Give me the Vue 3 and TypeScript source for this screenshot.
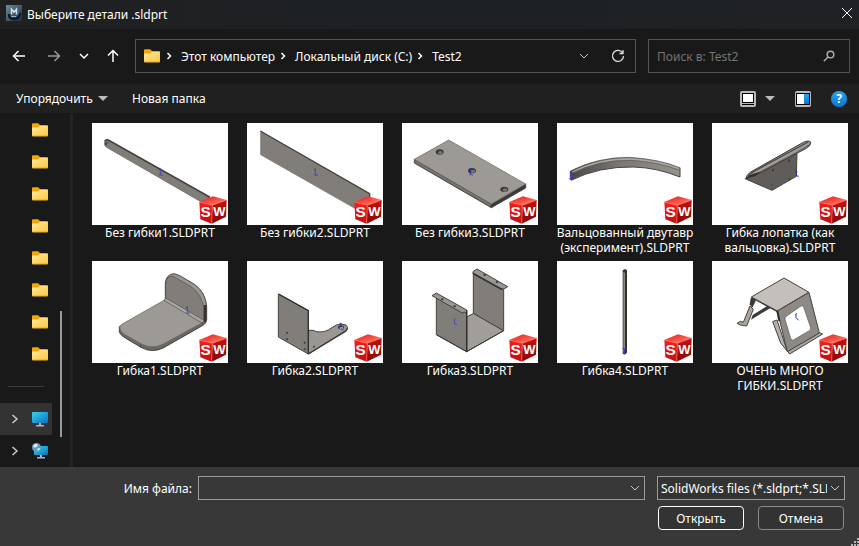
<script setup lang="ts">
import { ref } from 'vue'

interface Shape {
  d: string
  fill?: string
  stroke?: string
  width?: number
}

interface Part {
  name: string
  viewBox: string
  shapes: Shape[]
}

const face = '#817e79'
const light = '#9d9994'
const dark = '#3b3937'
const edge = '#45423f'
const axis = '#2b2bd0'

const outline = (d: string, fill: string): Shape => ({ d, fill, stroke: edge, width: 3 })
const line = (d: string, stroke: string = edge, width = 3): Shape => ({ d, stroke, width })
const dot = (x: number, y: number, rx: number, ry: number, fill: string = dark): Shape => ({
  d: `M${x - rx} ${y}a${rx} ${ry} 0 1 0 ${rx * 2} 0a${rx} ${ry} 0 1 0 ${-rx * 2} 0z`,
  fill,
})
const origin = (x: number, y: number): Shape => line(`M${x - 4} ${y + 4}L${x} ${y}V${y + 17}L${x + 8} ${y + 21}M${x - 4} ${y + 19}H${x + 3}`, axis, 2)

const parts: Part[] = [
  {
    name: 'Без гибки1.SLDPRT',
    viewBox: '21 24 408 306',
    shapes: [
      { d: 'M57 84Q58 74 68 74L375 247V277L68 99Q57 93 57 84Z', fill: face },
      line('M59 79Q62 73 70 75L375 247', edge, 5),
      line('M58 88Q60 96 68 99L350 261', '#6d6a66', 2),
      dot(66, 86, 6, 4),
      dot(68, 87, 3, 2, '#b0ada8'),
      origin(226, 161),
    ],
  },
  {
    name: 'Без гибки2.SLDPRT',
    viewBox: '486 24 408 306',
    shapes: [
      { d: 'M527 48L854 236V305L527 119Z', fill: face },
      line('M526 48L854 236V250', edge, 4),
      line('M527 48V119L820 286', '#706d69', 2),
      origin(691, 161),
    ],
  },
  {
    name: 'Без гибки3.SLDPRT',
    viewBox: '21 24 408 306',
    shapes: [
      outline('M58 133L289 267V278L58 144Z', '#77736e'),
      outline('M289 267L392 207V219L289 278Z', dark),
      { d: 'M58 133L161 75L392 207L289 267Z', fill: light, stroke: '#65625e', width: 2 },
      dot(134, 111, 12, 8),
      dot(136, 113, 7, 5, '#77736e'),
      dot(231, 167, 12, 8),
      dot(234, 169, 7, 5, '#77736e'),
      dot(328, 223, 12, 8),
      dot(330, 225, 7, 5, '#77736e'),
      origin(226, 160),
    ],
  },
  {
    name: 'Вальцованный двутавр (эксперимент).SLDPRT',
    viewBox: '486 24 408 306',
    shapes: [
      { d: 'M526 168Q608 126 704 127Q790 132 855 158V186Q786 158 716 156Q612 154 528 196Z', fill: 'url(#beam)' },
      line('M527 168Q608 126 704 127Q790 132 855 158', '#55524f', 2),
      line('M532 171Q610 132 704 132Q790 137 850 161', '#aaa6a1', 4),
      line('M536 174Q612 136 704 136Q790 141 850 165', '#5d5a57', 2),
      line('M528 196Q612 154 716 156Q786 158 855 186V158', '#45423f', 3),
      line('M526 168V195M524 190H533', axis, 3),
    ],
  },
  {
    name: 'Гибка лопатка (как вальцовка).SLDPRT',
    viewBox: '36 24 408 306',
    shapes: [
      outline('M137 192L160 168L291 112L289 184L216 226Z', '#605c59'),
      { d: 'M137 192Q140 178 152 171L310 82Q326 75 332 81Q334 91 319 100L290 115L180 174Q160 178 137 192Z', fill: '#a19c98', stroke: '#383634', width: 3 },
      line('M144 185Q151 175 164 168L324 81', '#4a4744', 4),
      line('M150 186Q160 176 180 171L292 111L330 88', '#5b5754', 3),
      { d: 'M137 192Q145 180 157 177L181 171L166 183Z', fill: '#34312f' },
      dot(219, 165, 3, 4),
      dot(267, 137, 3, 4),
      dot(268, 192, 3, 3),
      dot(215, 210, 2, 2),
      line('M289 168V182L296 184M286 170H292', axis, 3),
    ],
  },
  {
    name: 'Гибка1.SLDPRT',
    viewBox: '21 18 408 306',
    shapes: [
      outline('M103 215V232Q106 241 126 252L168 277Q202 296 236 278L352 212Q365 205 364 190V160L240 140Z', '#6b6864'),
      { d: 'M110 208L240 134L354 202L231 269Q200 283 170 267L120 239Q95 222 110 208Z', fill: light, stroke: '#65625e', width: 2 },
      outline('M241 131V84Q244 57 268 56L286 63L330 89Q361 112 365 153V194Q363 204 354 205Z', '#9a9691'),
      { d: 'M242 130V88Q243 62 265 64L318 95Q351 119 356 158V197Z', fill: face, stroke: '#524f4c', width: 2 },
      line('M360 150V201', '#35322f', 7),
      { d: 'M242 129L357 196L351 204L237 136Z', fill: '#aaa6a1', stroke: '#55524e', width: 2 },
      line('M166 268V278', '#45423f', 2),
      origin(307, 155),
    ],
  },
  {
    name: 'Гибка2.SLDPRT',
    viewBox: '486 18 408 306',
    shapes: [
      outline('M671 226Q685 224 695 230Q720 234 741 218L754 210Q770 204 783 210Q791 216 785 225L670 297Z', '#9a9691'),
      line('M787 219Q787 226 780 230L670 297', dark, 4),
      outline('M580 117L670 167V297L580 246Z', face),
      line('M581 117L670 167V295', '#343230', 4),
      dot(606, 233, 3, 3),
      dot(606, 253, 3, 3),
      dot(659, 263, 3, 3),
      dot(659, 283, 3, 3),
      dot(687, 275, 3, 3),
      dot(768, 217, 9, 6),
      dot(769, 219, 5, 3, '#ffffff'),
      line('M768 204V221L775 224M764 206L768 204', axis, 3),
    ],
  },
  {
    name: 'Гибка3.SLDPRT',
    viewBox: '21 18 408 306',
    shapes: [
      outline('M236 175L326 227L215 290V186Z', '#a19d98'),
      outline('M235 54L326 104V227L235 175Z', face),
      outline('M234 50L246 42L338 95L327 102Q322 99 318 103L234 57Z', '#9a9691'),
      line('M235 55L321 103', '#33312f', 4),
      outline('M124 129L215 170V290L124 239Z', face),
      outline('M111 122L124 114L215 165V174Q209 169 202 174Z', '#9a9691'),
      line('M215 166V290', '#2f2d2b', 4),
      line('M124 239L215 290L326 227', dark, 3),
      dot(142, 133, 4, 3),
      dot(179, 154, 4, 3),
      dot(269, 60, 4, 3),
      dot(306, 81, 4, 3),
      line('M182 190L178 193V206L186 209', axis, 2),
    ],
  },
  {
    name: 'Гибка4.SLDPRT',
    viewBox: '486 18 408 306',
    shapes: [
      { d: 'M683 46L690 42L696 46V293L689 299L683 294Z', fill: '#35332f' },
      { d: 'M685 50L690 53V296L685 292Z', fill: '#8b8781' },
      line('M683 281H688V296H683', axis, 3),
    ],
  },
  {
    name: 'ОЧЕНЬ МНОГО ГИБКИ.SLDPRT',
    viewBox: '36 18 408 306',
    shapes: [
      { d: 'M152 130L165 125L167 138L157 158L149 148Z', fill: dark },
      { d: 'M158 180L203 152L213 158L153 194Z', fill: dark },
      line('M155 127L232 169', '#35332f', 5),
      outline('M111 205L121 199L130 202L150 153L160 163L140 213L121 210Z', '#aaa59f'),
      outline('M154 126L252 69L327 112L232 168Z', '#c4bfba'),
      outline('M218 200L231 195L262 289L242 264Z', '#b4afaa'),
      outline('M262 288L358 233L368 237L269 297Z', '#aaa59f'),
      outline('M232 168L327 112L358 234L262 290Z', '#8d8984'),
      { d: 'M259 184L303 153Q309 150 311 157L332 218Q333 223 328 227L280 255Q275 257 272 250L255 193Q254 188 259 184Z', fill: '#ffffff', stroke: '#5a5753', width: 2 },
      line('M232 168L238 198', '#2c2a28', 6),
      line('M232 168L327 112', '#57544f', 3),
      line('M288 176V188L296 196M286 178L290 176', axis, 3),
    ],
  },
]

const quickFolders = 8
const crumbs = ['Этот компьютер', 'Локальный диск (C:)', 'Test2']
const fileName = ref('')
const query = ref('')
</script>

<template>
  <div class="dialog">
    <svg class="defs" width="0" height="0" aria-hidden="true">
      <defs>
        <linearGradient id="folder" x1="0" y1="0" x2="1" y2="1">
          <stop offset="0" stop-color="#ffe9a0" />
          <stop offset="1" stop-color="#ffc83a" />
        </linearGradient>
        <linearGradient id="screen" x1="0" y1="0" x2="1" y2="1">
          <stop offset="0" stop-color="#35d6e8" />
          <stop offset="1" stop-color="#0b6fc4" />
        </linearGradient>
        <linearGradient id="beam">
          <stop offset="0" stop-color="#4a4845" />
          <stop offset="0.45" stop-color="#7b7873" />
          <stop offset="1" stop-color="#96928d" />
        </linearGradient>
        <linearGradient id="cubeTop" x1="0" y1="0" x2="1" y2="1">
          <stop offset="0" stop-color="#e01814" />
          <stop offset="0.6" stop-color="#ff5a4c" />
          <stop offset="1" stop-color="#ffb3a8" />
        </linearGradient>
        <linearGradient id="cubeLeft" x1="0" y1="0" x2="0" y2="1">
          <stop offset="0" stop-color="#f02320" />
          <stop offset="1" stop-color="#c40d0d" />
        </linearGradient>
        <linearGradient id="cubeRight" x1="0" y1="0" x2="0" y2="1">
          <stop offset="0" stop-color="#c3120f" />
          <stop offset="1" stop-color="#8e0606" />
        </linearGradient>
        <linearGradient id="logo" x1="0" y1="0" x2="1" y2="1">
          <stop offset="0" stop-color="#6f8c9b" />
          <stop offset="1" stop-color="#1e2b3c" />
        </linearGradient>
        <linearGradient id="help" x1="0" y1="0" x2="0" y2="1">
          <stop offset="0" stop-color="#2aa3ee" />
          <stop offset="1" stop-color="#0b78d0" />
        </linearGradient>
        <symbol id="icon-folder" viewBox="0 0 16 14">
          <path d="M0 1.2Q0 .3 1 .3H5.6Q6.4 .3 7 1L8 2H15Q16 2 16 3V8H0Z" fill="#f3a70d" />
          <path d="M0 4.6H6.2L8 3H15.2Q16 3 16 3.8V12.4Q16 13.2 15.2 13.2H.8Q0 13.2 0 12.4Z" fill="url(#folder)" />
          <path d="M.5 13H15.5" stroke="#e09d16" stroke-width=".8" />
        </symbol>
      </defs>
    </svg>

    <header class="titlebar">
      <svg width="16" height="16" viewBox="0 0 16 16" aria-hidden="true">
        <rect width="16" height="16" fill="url(#logo)" />
        <path d="M3 9Q3 14 8 14Q13 14 14 8" fill="none" stroke="#0d1725" stroke-width="2.4" />
        <path d="M12.500 4Q14 8 10.500 12" fill="none" stroke="#2d659c" />
        <path d="M5.500 9.500V4.200L8 7L10.500 4.200V9.500" fill="none" stroke="#d5e0e6" stroke-width="1.500" />
        <path d="M5 11.500H10" stroke="#9db0bd" />
      </svg>
      <h1>Выберите детали .sldprt</h1>
      <button class="close" type="button" aria-label="Закрыть">
        <svg width="12" height="12" viewBox="0 0 12 12"><path d="M1 1L11 11M11 1L1 11" /></svg>
      </button>
    </header>

    <nav class="nav">
      <div class="history">
        <button type="button" aria-label="Назад">
          <svg width="14" height="14" viewBox="0 0 14 14"><path d="M13 7H1.500M6.500 2L1.500 7L6.500 12" /></svg>
        </button>
        <button class="faded" type="button" aria-label="Вперёд">
          <svg width="14" height="14" viewBox="0 0 14 14"><path d="M1 7H12.500M7.500 2L12.500 7L7.500 12" /></svg>
        </button>
        <button type="button" aria-label="Последние расположения">
          <svg width="10" height="10" viewBox="0 0 10 10"><path d="M1 3L5 7L9 3" /></svg>
        </button>
        <button type="button" aria-label="Вверх">
          <svg width="14" height="14" viewBox="0 0 14 14"><path d="M7 13V1.500M2 6.500L7 1.500L12 6.500" /></svg>
        </button>
      </div>

      <div class="address">
        <svg width="16" height="14"><use href="#icon-folder" /></svg>
        <ol class="crumbs">
          <li v-for="crumb in crumbs" :key="crumb">
            <svg width="6" height="8" viewBox="0 0 6 8" aria-hidden="true"><path d="M1.500 1L4.500 4L1.500 7" /></svg>
            <a href="#">{{ crumb }}</a>
          </li>
        </ol>
        <button type="button" aria-label="Предыдущие расположения">
          <svg class="thin" width="10" height="10" viewBox="0 0 10 10"><path d="M1 3L5 7L9 3" /></svg>
        </button>
        <button type="button" aria-label="Обновить">
          <svg class="thin refresh" width="14" height="14" viewBox="0 0 14 14">
            <path d="M11.800 4.200A5.500 5.500 0 1 0 12.500 7M12 1V4.500H8.500" />
          </svg>
        </button>
      </div>

      <label class="search">
        <input v-model="query" type="text" placeholder="Поиск в: Test2" aria-label="Поиск" />
        <svg width="12" height="12" viewBox="0 0 12 12" aria-hidden="true">
          <circle cx="7.500" cy="4.500" r="3.300" />
          <path d="M5 7L.8 11.200" />
        </svg>
      </label>
    </nav>

    <div class="toolbar">
      <button class="organize" type="button">Упорядочить <span class="caret"></span></button>
      <button type="button">Новая папка</button>
      <div class="tools">
        <button type="button" aria-label="Изменить представление">
          <svg width="16" height="16" viewBox="0 0 16 16">
            <rect width="16" height="16" rx="2" fill="#b9b9b9" />
            <rect x="2" y="2" width="12" height="10" fill="#000" />
            <rect x="3" y="3" width="10" height="8" fill="#fff" />
            <rect x="2" y="13" width="12" height="1" fill="#000" />
          </svg>
          <span class="caret"></span>
        </button>
        <button type="button" aria-label="Область просмотра">
          <svg width="16" height="16" viewBox="0 0 16 16">
            <rect width="16" height="16" rx="2" fill="#b9b9b9" />
            <rect x="1" y="2" width="14" height="12" fill="#000" />
            <rect x="2" y="3" width="7" height="10" fill="#fff" />
            <rect x="9" y="3" width="5" height="10" fill="url(#help)" />
          </svg>
        </button>
        <button type="button" aria-label="Справка">
          <svg width="16" height="16" viewBox="0 0 16 16">
            <circle cx="8" cy="8" r="8" fill="url(#help)" />
            <text x="8" y="12" text-anchor="middle" class="help-mark">?</text>
          </svg>
        </button>
      </div>
    </div>

    <main class="body">
      <aside class="tree">
        <ul>
          <li v-for="n in quickFolders" :key="n">
            <svg width="16" height="14"><use href="#icon-folder" /></svg>
          </li>
          <li class="rule"></li>
          <li class="node selected">
            <svg class="expander" width="8" height="10" viewBox="0 0 8 10"><path d="M1.500 1L6 5L1.500 9" /></svg>
            <svg width="16" height="16" viewBox="0 0 16 16">
              <rect y="1" width="16" height="11" rx="1" fill="url(#screen)" />
              <path d="M7 12H9V14H12V15.500H4V14H7Z" fill="#aeb6bb" />
            </svg>
          </li>
          <li class="node">
            <svg class="expander" width="8" height="10" viewBox="0 0 8 10"><path d="M1.500 1L6 5L1.500 9" /></svg>
            <svg width="16" height="16" viewBox="0 0 16 16">
              <rect x="2" y="3" width="14" height="9" rx="1" fill="url(#screen)" />
              <path d="M8 12H10V14H13V15.500H5V14H8Z" fill="#aeb6bb" />
              <circle cx="4.500" cy="4.500" r="4.500" fill="#5d9dc4" />
              <path d="M1 3Q3 0 5 1Q7 3 4 4Q2 6 1 3ZM5 6Q8 4 8 6Q6 9 5 6Z" fill="#d2eaf5" />
            </svg>
          </li>
        </ul>
        <div class="track"><div class="thumb"></div></div>
      </aside>

      <ul class="files">
        <li v-for="part in parts" :key="part.name">
          <button class="file" type="button">
            <span class="preview">
              <svg :viewBox="part.viewBox" aria-hidden="true">
                <path
                  v-for="(shape, i) in part.shapes"
                  :key="i"
                  :d="shape.d"
                  :fill="shape.fill ?? 'none'"
                  :stroke="shape.stroke ?? 'none'"
                  :stroke-width="shape.width ?? 0"
                />
              </svg>
              <svg class="badge" viewBox="0 0 84 84" aria-hidden="true">
                <path d="M1 18L42 1L83 12L40 28Z" fill="url(#cubeTop)" />
                <path d="M1 18L40 28L38 83L4 70Z" fill="url(#cubeLeft)" />
                <path d="M40 28L83 12L81 62L38 83Z" fill="url(#cubeRight)" />
                <path d="M1 18L40 28L83 12M40 28L38 83" fill="none" stroke="#ff7468" stroke-width="2" />
                <text x="20" y="64" text-anchor="middle" font-size="46">S</text>
                <text x="61" y="59" text-anchor="middle" font-size="39">W</text>
              </svg>
            </span>
            <span class="name">{{ part.name }}</span>
          </button>
        </li>
      </ul>
    </main>

    <footer class="footer">
      <div class="row">
        <label for="file-name">Имя файла:</label>
        <div class="combo grow">
          <input id="file-name" v-model="fileName" type="text" />
          <svg class="thin" width="10" height="10" viewBox="0 0 10 10" aria-hidden="true"><path d="M1 3L5 7L9 3" /></svg>
        </div>
        <div class="combo type">
          <select aria-label="Тип файлов">
            <option>SolidWorks files (*.sldprt;*.SLDPRT)</option>
          </select>
          <svg class="thin" width="10" height="10" viewBox="0 0 10 10" aria-hidden="true"><path d="M1 3L5 7L9 3" /></svg>
        </div>
      </div>
      <div class="actions">
        <button class="primary" type="button">Открыть</button>
        <button type="button">Отмена</button>
      </div>
      <svg class="grip" width="8" height="8" viewBox="0 0 8 8" aria-hidden="true">
        <path d="M6 0h2v2h-2zM3 3h2v2h-2zM6 3h2v2h-2zM0 6h2v2h-2zM3 6h2v2h-2zM6 6h2v2h-2z" />
      </svg>
    </footer>
  </div>
</template>

<style>
body {
  background: #191919;
}
</style>

<style scoped>
.dialog {
  display: flex;
  flex-direction: column;
  min-height: 100vh;
  background: #191919;
  color: #fff;
  font-family: "Noto Sans", "Open Sans", sans-serif;
  font-size: 12px;
  line-height: 15px;
}

.dialog *,
.dialog {
  box-sizing: border-box;
}

.defs {
  position: absolute;
}

button,
input,
select {
  margin: 0;
  padding: 0;
  border: 0;
  background: none;
  color: inherit;
  font: inherit;
}

svg {
  display: block;
  flex: none;
}

ul,
ol {
  margin: 0;
  padding: 0;
  list-style: none;
}

.titlebar {
  display: flex;
  align-items: center;
  gap: 5px;
  height: 29px;
  padding: 0 6px 3px;
  background: linear-gradient(90deg, #202020, #1d2125 45%, #1d2125 65%, #202124);
}

.titlebar h1 {
  flex: 1;
  margin: 0;
  padding-top: 2px;
  font-size: 12px;
  font-weight: 400;
}

.close path,
.history path {
  fill: none;
  stroke: #fff;
  stroke-width: 1.5;
}

.close path {
  stroke-width: 1;
}

.nav {
  display: flex;
  align-items: center;
  gap: 12px;
  height: 55px;
  padding: 0 9px 1px 12px;
}

.history {
  display: grid;
  grid-template-columns: 35px 32px 27px 17px;
  align-items: center;
}

.history .faded path {
  stroke: #999;
}

.address,
.search {
  display: flex;
  align-items: center;
  height: 34px;
  border: 1px solid #535353;
}

.address {
  flex: 1;
  gap: 6px;
  padding: 0 10px 0 8px;
}

.address button {
  display: flex;
  justify-content: center;
  width: 14px;
  margin-left: 14px;
}

.crumbs {
  display: flex;
  flex: 1;
  gap: 5px;
}

.crumbs li {
  display: flex;
  align-items: center;
  gap: 9px;
}

.crumbs a {
  color: #fff;
  text-decoration: none;
  white-space: nowrap;
}

.crumbs path {
  fill: none;
  stroke: #fff;
  stroke-width: 1.5;
}

.thin path {
  fill: none;
  stroke: #ccc;
  stroke-width: 1;
}

.refresh path {
  stroke: #ddd;
  stroke-width: 1.3;
}

.search {
  width: 202px;
  padding: 0 14px 0 8px;
}

.search input {
  flex: 1;
  min-width: 0;
  outline: none;
}

.search input::placeholder {
  color: #747474;
  opacity: 1;
}

.search svg {
  fill: none;
  stroke: #aaa;
  stroke-width: 1.5;
}

.toolbar {
  display: flex;
  align-items: center;
  height: 30px;
  padding: 0 12px 0 16px;
  background: #202020;
  border-bottom: 1px solid #191919;
}

.toolbar button {
  display: flex;
  align-items: center;
  gap: 5px;
}

.toolbar .organize {
  min-width: 116px;
}

.caret {
  border: 5px solid transparent;
  border-top-color: #bbb;
  border-bottom: 0;
}

.tools {
  display: flex;
  gap: 20px;
  margin-left: auto;
}

.tools button:first-child {
  gap: 9px;
}

.help-mark {
  fill: #fff;
  font-size: 12px;
  font-weight: 700;
}

.body {
  display: flex;
  flex: 1;
}

.tree {
  display: flex;
  width: 73px;
  border-right: 3px solid #242424;
}

.tree ul {
  width: 52px;
}

.tree li {
  display: flex;
  align-items: center;
  justify-content: flex-end;
  height: 32px;
  padding-right: 4px;
}

.tree .rule {
  height: 33px;
  padding: 0 8px;
}

.rule::before {
  flex: 1;
  height: 1px;
  background: #3c3c3c;
  content: "";
}

.tree .node {
  justify-content: space-between;
  padding-left: 11px;
}

.tree .selected {
  background: #333;
}

.expander path {
  fill: none;
  stroke: #ccc;
  stroke-width: 1.5;
}

.track {
  display: flex;
  flex: 1;
  align-items: flex-end;
  padding: 0 8px 30px;
}

.thumb {
  width: 2px;
  height: 39%;
  background: #9a9a9a;
}

.files {
  display: grid;
  flex: 1;
  grid-template-columns: repeat(auto-fill, 136px);
  grid-auto-rows: max-content;
  gap: 6px 19px;
  padding: 9px 11px 9px 19px;
}

.file {
  display: block;
  width: 100%;
  text-align: center;
}

.preview {
  position: relative;
  display: block;
  aspect-ratio: 4 / 3;
  background: #fff;
}

.badge {
  position: absolute;
  right: 1px;
  bottom: 1px;
  width: 28px;
  height: 28px;
}

.badge text {
  fill: #fff;
  font-family: "Liberation Sans", sans-serif;
  font-weight: 700;
}

.name {
  display: block;
  min-height: 30px;
  margin: 0 -6px;
}

.footer {
  position: relative;
  height: 79px;
  padding: 9px 14px 0;
  background: #383838;
}

.row {
  display: flex;
  align-items: center;
  gap: 12px;
}

.row label {
  width: 178px;
  margin-right: -6px;
  text-align: right;
}

.combo {
  display: flex;
  align-items: center;
  height: 24px;
  padding: 0 4px 0 3px;
  border: 1px solid #9b9b9b;
}

.grow {
  flex: 1;
}

.type {
  width: 188px;
  background: #333;
}

.combo input,
.combo select {
  flex: 1;
  min-width: 0;
  overflow: hidden;
  outline: none;
  appearance: none;
  text-overflow: clip;
  white-space: nowrap;
}

.combo select {
  margin-right: 3px;
}

.actions {
  display: flex;
  gap: 14px;
  justify-content: flex-end;
  padding: 6px 1px 0;
}

.actions button {
  width: 86px;
  height: 24px;
  border: 1px solid #8a8a8a;
  border-radius: 4px;
  background: #333;
}

.actions .primary {
  border-color: #fff;
}

.grip {
  position: absolute;
  right: 0;
  bottom: 0;
  fill: #b5b5b5;
}
</style>
